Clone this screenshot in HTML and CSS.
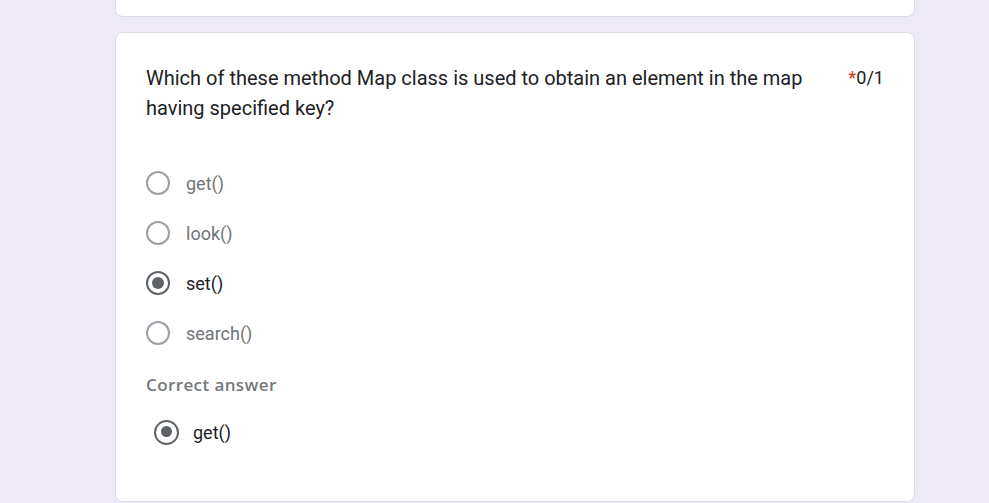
FILE: index.html
```html
<!DOCTYPE html>
<html>
<head>
<meta charset="utf-8">
<link rel="stylesheet" href="styles.css">
</head>
<body>
<div class="page">
  <div class="card card-prev"></div>
  <div class="card card-q">
    <div class="q-head">
      <div class="q-title">Which of these method Map class is used to obtain an element in the map having specified key?</div>
      <div class="q-score"><span class="req">*</span>0/1</div>
    </div>
    <div class="options">
      <div class="opt"><span class="radio"></span><span class="opt-label">get()</span></div>
      <div class="opt"><span class="radio"></span><span class="opt-label">look()</span></div>
      <div class="opt selected"><span class="radio"></span><span class="opt-label">set()</span></div>
      <div class="opt"><span class="radio"></span><span class="opt-label">search()</span></div>
    </div>
    <div class="correct-title">Correct answer</div>
    <div class="correct">
      <div class="opt selected"><span class="radio"></span><span class="opt-label">get()</span></div>
    </div>
  </div>
</div>
</body>
</html>
```
FILE: styles.css
```css
html, body {
  margin: 0;
  padding: 0;
  background: #eee9f7;
  font-family: Roboto, "Liberation Sans", sans-serif;
  overflow: hidden;
}
.page {
  width: 800px;
  margin-left: 115px;
  display: flex;
  flex-direction: column;
  gap: 15px;
  margin-top: -40px;
}
.card {
  background: #fff;
  border: 1px solid #dadce0;
  border-radius: 8px;
  box-sizing: border-box;
}
.card-prev {
  height: 57px;
}
.card-q {
  height: 470px;
  padding: 30px 30px 0 30px;
}
.q-head {
  display: flex;
  justify-content: space-between;
  align-items: flex-start;
}
.q-title {
  font-size: 20px;
  line-height: 30px;
  color: #202124;
  width: 670px;
}
.q-score {
  font-size: 18px;
  line-height: 30px;
  color: #202124;
}
.req {
  color: #d93025;
}
.options {
  margin-top: 35px;
  display: flex;
  flex-direction: column;
}
.opt {
  display: flex;
  align-items: center;
  height: 50px;
}
.radio {
  width: 24px;
  height: 24px;
  border: 2px solid #9aa0a6;
  border-radius: 50%;
  box-sizing: border-box;
  position: relative;
  margin-right: 16px;
  flex: none;
}
.opt.selected .radio {
  border-color: #5f6368;
}
.opt.selected .radio::after {
  content: "";
  position: absolute;
  left: 4px;
  top: 4px;
  width: 12px;
  height: 12px;
  border-radius: 50%;
  background: #5f6368;
}
.opt-label {
  font-size: 18px;
  color: #70757a;
}
.opt.selected .opt-label {
  color: #202124;
}
.correct-title {
  margin-top: 15px;
  font-family: "Open Sans", Roboto, sans-serif;
  font-weight: 600;
  font-size: 17px;
  letter-spacing: 0.4px;
  color: #74787d;
  line-height: 24px;
}
.correct {
  padding-left: 8px;
  margin-top: 15px;
}
.correct .opt {
  height: 40px;
}
.correct .radio {
  width: 25px;
  height: 25px;
  border-width: 2.5px;
  margin-right: 14px;
}
.correct .opt.selected .radio::after {
  left: 4.5px;
  top: 4.5px;
  width: 11px;
  height: 11px;
}
```
